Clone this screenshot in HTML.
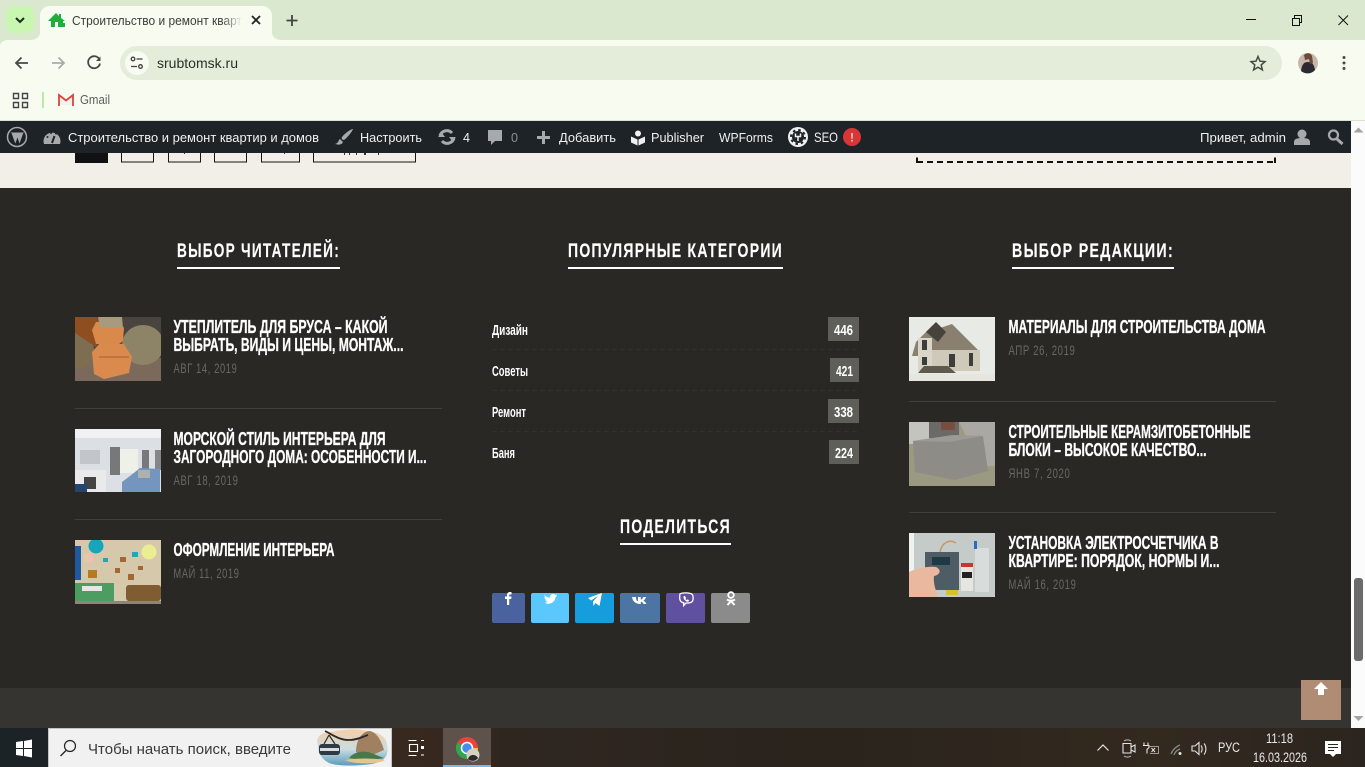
<!DOCTYPE html>
<html lang="ru"><head><meta charset="utf-8"><title>srubtomsk.ru</title>
<style>
html,body{margin:0;padding:0;width:1365px;height:767px;overflow:hidden;background:#2a2825}
svg{display:block;position:absolute;left:0;top:0}
text{font-family:"Liberation Sans","DejaVu Sans",sans-serif}
.h{font-weight:700;font-size:19.500px;fill:#fff;letter-spacing:1.800px;stroke:#fff;stroke-width:.15px}
.t{font-weight:700;font-size:18px;fill:#fff;stroke:#fff;stroke-width:.3px}
.d{font-size:14px;fill:#6a6864;letter-spacing:1px}
.c{font-weight:700;font-size:14.500px;fill:#fff}
.b{font-weight:700;font-size:14.500px;fill:#fff}
.w{font-size:13px;fill:#f0f0f1}
</style></head><body>
<svg width="1365" height="767" viewBox="0 0 1365 767" xmlns="http://www.w3.org/2000/svg">
<defs>
<linearGradient id="fade" x1="0" x2="1"><stop offset="0" stop-color="#f7fbf0" stop-opacity="0"/><stop offset="1" stop-color="#f7fbf0"/></linearGradient>
<linearGradient id="tb" x1="0" x2="1"><stop offset="0" stop-color="#1b2327"/><stop offset=".035" stop-color="#1d2226"/><stop offset=".3" stop-color="#38291f"/><stop offset=".38" stop-color="#2f2620"/><stop offset=".6" stop-color="#2a241d"/><stop offset=".85" stop-color="#33291f"/><stop offset="1" stop-color="#2b251f"/></linearGradient>
<linearGradient id="sky" x1="0" x2="0" y2="1"><stop offset="0" stop-color="#f6cfa8"/><stop offset=".55" stop-color="#c9dde2"/><stop offset="1" stop-color="#5c9bbb"/></linearGradient>
<clipPath id="c1"><rect x="75" y="317" width="86" height="64"/></clipPath>
<clipPath id="c2"><rect x="75" y="429" width="86" height="63"/></clipPath>
<clipPath id="c3"><rect x="75" y="540" width="86" height="64"/></clipPath>
<clipPath id="c4"><rect x="909" y="317" width="86" height="64"/></clipPath>
<clipPath id="c5"><rect x="909" y="422" width="86" height="64"/></clipPath>
<clipPath id="c6"><rect x="909" y="533" width="86" height="64"/></clipPath>
</defs>

<!-- browser chrome -->
<rect width="1365" height="40" fill="#d9e8cf"/>
<rect y="40" width="1365" height="81" fill="#f7fbf0"/>
<path d="M0 40h8c-5 0-8 3-8 6z" fill="#d9e8cf"/>
<rect y="120" width="1365" height="1" fill="#dcdfd6"/>
<rect x="6" y="6" width="28" height="27" rx="8" fill="#c9f7b1"/>
<path d="M16 18l4 4 4-4" fill="none" stroke="#1f2a1c" stroke-width="2"/>
<path d="M30 40c6 0 10-3 10-8V16c0-6 4-10 10-10h212c6 0 10 4 10 10v16c0 5 4 8 10 8z" fill="#f7fbf0"/>
<path d="M48 21l8-8 3 3v-2h2v4l4 3h-2v6H51v-6z" fill="#1fae3c"/><rect x="55" y="22" width="3" height="5" fill="#f7fbf0"/><rect x="60" y="23" width="5" height="4" fill="#1fae3c"/>
<text x="72" y="25" font-size="13" fill="#3a3f38" textLength="170" lengthAdjust="spacingAndGlyphs">Строительство и ремонт кварт</text>
<rect x="222" y="10" width="20" height="22" fill="url(#fade)"/>
<path d="M252 16l8 8M260 16l-8 8" stroke="#222" stroke-width="1.800"/>
<path d="M292 15v11M286.500 20.500h11" stroke="#444" stroke-width="1.800"/>
<path d="M1246 19.500h10" stroke="#111" stroke-width="1"/>
<path d="M1292.500 18.500h7v7h-7zM1294.500 18v-2.500h7v7h-2" fill="none" stroke="#111" stroke-width="1"/>
<path d="M1338.500 15.500l9.500 9.500M1348 15.500l-9.500 9.500" stroke="#111" stroke-width="1"/>

<path d="M28 63H16M21.500 57.500L16 63l5.500 5.500" fill="none" stroke="#444c42" stroke-width="1.800"/>
<path d="M52 63h12M58.500 57.500L64 63l-5.500 5.500" fill="none" stroke="#a9aea5" stroke-width="1.800"/>
<path d="M99.500 59.500a6 6 0 1 0 .5 4" fill="none" stroke="#444c42" stroke-width="1.800"/><path d="M100.500 56.500v4.500H96z" fill="#444c42"/>
<rect x="120" y="46" width="1162" height="34" rx="17" fill="#e3edd9"/>
<circle cx="137" cy="63" r="12" fill="#f7fbf0"/>
<circle cx="133" cy="59" r="1.800" fill="none" stroke="#3d443b" stroke-width="1.300"/><path d="M136.500 59h6M131 66.500h6" stroke="#3d443b" stroke-width="1.300"/><circle cx="140.500" cy="66.500" r="1.800" fill="none" stroke="#3d443b" stroke-width="1.300"/>
<text x="157" y="68" font-size="14" fill="#2b3029" textLength="81" lengthAdjust="spacingAndGlyphs">srubtomsk.ru</text>
<path d="M1258 56.500l2 4.700 5 .4-3.800 3.300 1.200 5-4.400-2.700-4.400 2.700 1.200-5-3.800-3.300 5-.4z" fill="none" stroke="#444c42" stroke-width="1.500"/>
<circle cx="1308" cy="63" r="10" fill="#c9b6a8"/><path d="M1301 71c1-7 3-9 7-9s6 2 7 8a10 10 0 0 1-14 1z" fill="#2c2a30"/><path d="M1304 55c3-3 7-2 8 1l1 7-3 1-1-5-4 1z" fill="#6a4a38"/>
<circle cx="1344" cy="57.500" r="1.500" fill="#444c42"/><circle cx="1344" cy="63" r="1.500" fill="#444c42"/><circle cx="1344" cy="68.500" r="1.500" fill="#444c42"/>
<path d="M13.500 93.500h5v5h-5zM22.500 93.500h5v5h-5zM13.500 102.500h5v5h-5zM22.500 102.500h5v5h-5z" fill="none" stroke="#444" stroke-width="1.400"/>
<rect x="42" y="92" width="2" height="16" fill="#bde8a5"/>
<path d="M59 105V95l7 5.500 7-5.500v10" fill="#f1f1ee"/><path d="M59 106V95l7 5.500L73 95v11" fill="none" stroke="#d8463a" stroke-width="1.800"/>
<text x="80" y="104" font-size="13" fill="#5b5f58" textLength="30" lengthAdjust="spacingAndGlyphs">Gmail</text>

<!-- page -->
<rect y="153" width="1351" height="35" fill="#f2efe9"/>
<rect x="75" y="153" width="33" height="10" fill="#111"/>
<g fill="none" stroke="#151515" stroke-width="1"><rect x="121.500" y="150" width="32" height="12"/><rect x="168.500" y="150" width="32" height="12"/><rect x="214.500" y="150" width="32" height="12"/><rect x="261.500" y="150" width="38" height="12"/><rect x="313.500" y="150" width="102" height="12"/></g>
<g fill="#333"><rect x="344" y="153" width="1" height="2"/><rect x="349" y="153" width="1" height="2"/><rect x="356" y="153" width="1" height="2"/><rect x="364" y="153" width="2" height="2"/><rect x="378" y="153" width="1" height="2"/><rect x="184" y="153" width="1" height="1"/><rect x="284" y="153" width="1" height="1"/></g>
<path d="M917 162h358" fill="none" stroke="#111" stroke-width="2" stroke-dasharray="6 4"/>
<path d="M1275 163v-5.500M917 163v-5.500" fill="none" stroke="#111" stroke-width="2"/>
<rect y="188" width="1351" height="500" fill="#2a2825"/>
<rect y="688" width="1351" height="40" fill="#353430"/>

<!-- headings -->
<text class="h" x="177" y="257" textLength="163" lengthAdjust="spacingAndGlyphs">ВЫБОР ЧИТАТЕЛЕЙ:</text>
<rect x="177" y="267" width="163" height="2" fill="#fff"/>
<text class="h" x="568" y="257" textLength="215" lengthAdjust="spacingAndGlyphs">ПОПУЛЯРНЫЕ КАТЕГОРИИ</text>
<rect x="568" y="267" width="215" height="2" fill="#fff"/>
<text class="h" x="1012" y="257" textLength="162" lengthAdjust="spacingAndGlyphs">ВЫБОР РЕДАКЦИИ:</text>
<rect x="1012" y="267" width="162" height="2" fill="#fff"/>
<text class="h" x="620" y="533" textLength="111" lengthAdjust="spacingAndGlyphs">ПОДЕЛИТЬСЯ</text>
<rect x="620" y="543" width="111" height="2" fill="#fff"/>

<!-- left column -->
<g clip-path="url(#c1)"><rect x="75" y="317" width="86" height="64" fill="#4a4440"/><rect x="75" y="358" width="86" height="23" fill="#7b6a5c"/><ellipse cx="143" cy="345" rx="21" ry="20" fill="#8d8467"/><ellipse cx="80" cy="350" rx="14" ry="18" fill="#7d6e52"/><path d="M75 317h22l6 12-7 18-21-14z" fill="#8f4e20"/><path d="M92 330l4-8h24l4 6-1 13-4 3H96z" fill="#d9894a"/><path d="M98 317h24l1 11H100z" fill="#a89a7c"/><path d="M92 352l8-9 24 1 8 13-3 16-25 6-10-5z" fill="#d98a4c"/><path d="M99 357l30 0" stroke="#a8622a" stroke-width="1" fill="none"/></g>
<g clip-path="url(#c2)"><rect x="75" y="429" width="86" height="63" fill="#dcdfe3"/><rect x="75" y="429" width="86" height="9" fill="#eff1f3"/><rect x="120" y="449" width="18" height="24" fill="#eef1e8"/><rect x="110" y="447" width="10" height="28" fill="#77787a"/><rect x="142" y="450" width="7" height="24" fill="#77787a"/><rect x="155" y="450" width="6" height="20" fill="#85868a"/><rect x="80" y="450" width="20" height="14" fill="#c2c6ca"/><rect x="75" y="470" width="31" height="22" fill="#eaeaea"/><rect x="84" y="477" width="12" height="12" fill="#444"/><rect x="75" y="484" width="12" height="8" fill="#23456f"/><path d="M122 482l8-6 10-8 20 1v23h-38z" fill="#7495bd"/><rect x="138" y="470" width="12" height="8" fill="#aeb1ae"/></g>
<g clip-path="url(#c3)"><rect x="75" y="540" width="86" height="64" fill="#d6c9ab"/><rect x="75" y="546" width="6" height="34" fill="#1e5aa0"/><circle cx="96" cy="546" r="7.500" fill="#17a4bd"/><circle cx="149" cy="552" r="7.500" fill="#ecec93"/><circle cx="89" cy="558" r="5" fill="#eec2b0"/><g fill="#a5672f"><rect x="120" y="557" width="6" height="5"/><rect x="138" y="566" width="5" height="4"/><rect x="115" y="568" width="5" height="5"/><rect x="128" y="574" width="6" height="6"/></g><rect x="103" y="558" width="5" height="4" fill="#2aa2b8"/><rect x="132" y="552" width="6" height="5" fill="#2aa2b8"/><rect x="88" y="570" width="9" height="8" fill="#b87a20"/><rect x="75" y="583" width="39" height="18" fill="#4d9d63"/><rect x="82" y="586" width="20" height="5" fill="#e6e6e6"/><rect x="126" y="585" width="35" height="16" rx="3" fill="#805c33"/><rect x="75" y="601" width="86" height="3" fill="#8c8578"/></g>
<text class="t" x="173.500" y="333" textLength="214" lengthAdjust="spacingAndGlyphs">УТЕПЛИТЕЛЬ ДЛЯ БРУСА – КАКОЙ</text>
<text class="t" x="173.500" y="351" textLength="230" lengthAdjust="spacingAndGlyphs">ВЫБРАТЬ, ВИДЫ И ЦЕНЫ, МОНТАЖ...</text>
<text class="d" x="173.500" y="373" textLength="64" lengthAdjust="spacingAndGlyphs">АВГ 14, 2019</text>
<rect x="75" y="408" width="367" height="1" fill="#41403c"/>
<text class="t" x="173.500" y="445" textLength="212" lengthAdjust="spacingAndGlyphs">МОРСКОЙ СТИЛЬ ИНТЕРЬЕРА ДЛЯ</text>
<text class="t" x="173.500" y="463" textLength="253" lengthAdjust="spacingAndGlyphs">ЗАГОРОДНОГО ДОМА: ОСОБЕННОСТИ И...</text>
<text class="d" x="173.500" y="485" textLength="65" lengthAdjust="spacingAndGlyphs">АВГ 18, 2019</text>
<rect x="75" y="519" width="367" height="1" fill="#41403c"/>
<text class="t" x="173.500" y="556" textLength="161" lengthAdjust="spacingAndGlyphs">ОФОРМЛЕНИЕ ИНТЕРЬЕРА</text>
<text class="d" x="173.500" y="578" textLength="66" lengthAdjust="spacingAndGlyphs">МАЙ 11, 2019</text>

<!-- categories -->
<text class="c" x="492" y="335" textLength="36" lengthAdjust="spacingAndGlyphs">Дизайн</text>
<text class="c" x="492" y="376" textLength="36" lengthAdjust="spacingAndGlyphs">Советы</text>
<text class="c" x="492" y="417" textLength="34" lengthAdjust="spacingAndGlyphs">Ремонт</text>
<text class="c" x="492" y="458" textLength="23" lengthAdjust="spacingAndGlyphs">Баня</text>
<path d="M492 349.500h367M492 390.500h367M492 431.500h367" stroke="#33312d" stroke-width="1" stroke-dasharray="5 3"/>
<rect x="828" y="317" width="31" height="24" fill="#5f5f59"/><text class="b" x="834" y="335" textLength="19" lengthAdjust="spacingAndGlyphs">446</text>
<rect x="830" y="358" width="29" height="24" fill="#5f5f59"/><text class="b" x="836" y="376" textLength="17" lengthAdjust="spacingAndGlyphs">421</text>
<rect x="828" y="399" width="31" height="24" fill="#5f5f59"/><text class="b" x="834" y="417" textLength="19" lengthAdjust="spacingAndGlyphs">338</text>
<rect x="829" y="440" width="30" height="24" fill="#5f5f59"/><text class="b" x="835" y="458" textLength="18" lengthAdjust="spacingAndGlyphs">224</text>

<!-- social -->
<rect x="492" y="593" width="33" height="30" rx="2" fill="#4a639f"/>
<rect x="531" y="593" width="38" height="30" rx="2" fill="#5ac8fd"/>
<rect x="575" y="593" width="39" height="30" rx="2" fill="#179cde"/>
<rect x="620" y="593" width="40" height="30" rx="2" fill="#4c75a3"/>
<rect x="666" y="593" width="39" height="30" rx="2" fill="#5f519f"/>
<rect x="711" y="593" width="39" height="30" rx="2" fill="#8b8b8b"/>
<path d="M507 605v-6h-2v-2.500h2v-1.500c0-2 1-3 3-3h1.500v2.500H510c-.6 0-.8.3-.8 1v1h2.300l-.3 2.500h-2v6z" fill="#fff"/>
<path d="M544 595c2 1.500 4 2.500 6 2.500 0-2.500 1.500-3.500 3-3.500 1 0 2 .5 2.500 1l1.500-.500-.8 1.500.8-.2c-.4.7-1 1.200-1.500 1.500-.2 3.500-3.500 6.500-7 6.500-1.500 0-2.800-.3-3.800-1 1.300 0 2.300-.4 3-1-1.300-.3-2-1-2.300-2h1c-1.300-.5-2-1.500-2-2.800l1 .3c-1-.8-1.400-2-.4-2.800z" fill="#fff"/>
<path d="M588 598l14-5-2.500 13-4-3-2 3-.5-4.500 5-5.500-7 4.500z" fill="#fff"/>
<path d="M633 597h3c0 3 1 4 2 4.300V597h2.800v2.700c1-.2 2-1.300 2.500-2.700h2.700c-.4 1.800-1.500 3-2.700 3.800 1.300.6 2.500 1.700 3.200 3.200h-3c-.6-1.300-1.500-2.200-2.700-2.400v2.400h-.8c-4.500 0-7.500-3-7.900-7z" fill="#fff"/>
<path d="M680 593.800c2.500-1.300 9.500-1.300 12 .4 1.500 1.500 1.500 6 0 7.500-1.300 1.100-3.500 1.400-6 1.300l-2.300 2.500v-2.700c-3-.5-4-2.200-4-4.800 0-2 0-3.300.3-4.200z" fill="none" stroke="#fff" stroke-width="1.300"/><path d="M684 596c1-.5 1.500 1 2 1.800.4.700-1 .7-.3 1.600.6.700 1 .6 1.500.2.800-.3 2 .8 1.700 1.400-.8 1.300-2.500.8-4-.7-1.400-1.400-2-3.500-.9-4.300z" fill="#fff"/>
<circle cx="731" cy="595" r="2.800" fill="none" stroke="#fff" stroke-width="1.800"/><path d="M727 599.500c2 1.500 6 1.500 8 0M731 601l-3.500 4M731 601l3.500 4" stroke="#fff" stroke-width="2" fill="none"/>

<!-- right column -->
<g clip-path="url(#c4)"><rect x="909" y="317" width="86" height="64" fill="#e8eae6"/><path d="M916 342l16-16 8 2 12-4 28 28-6 4H912z" fill="#8a8070"/><path d="M926 332l10-10 10 10-8 10z" fill="#47423b"/><rect x="918" y="338" width="14" height="33" fill="#d9d5c9"/><rect x="932" y="350" width="48" height="21" fill="#cfc9b9"/><rect x="922" y="340" width="5" height="10" fill="#3d3d3a"/><rect x="922" y="357" width="5" height="8" fill="#3d3d3a"/><rect x="949" y="354" width="6" height="13" fill="#3d3d3a"/><rect x="969" y="353" width="4" height="13" fill="#3d3d3a"/><path d="M918 373h38l-8-7h-24z" fill="#5f5a50"/><rect x="909" y="374" width="86" height="7" fill="#e6e6e0"/></g>
<g clip-path="url(#c5)"><rect x="909" y="422" width="86" height="64" fill="#9a9a82"/><rect x="909" y="422" width="20" height="22" fill="#c4c4be"/><rect x="929" y="422" width="30" height="16" fill="#6c6a66"/><path d="M959 422h36v44h-14z" fill="#aaa8a2"/><rect x="941" y="422" width="14" height="8" fill="#7a4e3e"/><path d="M913 441l40-6 30 1 5 35-33 9-40-8z" fill="#8e8c86"/><path d="M913 441l40-6 30 1-34 6z" fill="#9c9a94"/></g>
<g clip-path="url(#c6)"><rect x="909" y="533" width="86" height="64" fill="#c5cbc8"/><rect x="909" y="533" width="5" height="40" fill="#f0f2f0"/><rect x="925" y="552" width="34" height="38" fill="#4e5c66"/><rect x="932" y="557" width="18" height="8" fill="#1d3a45"/><rect x="961" y="567" width="12" height="24" fill="#e5e5e2"/><rect x="961" y="563" width="12" height="4" fill="#c33"/><rect x="962" y="572" width="10" height="6" fill="#222"/><path d="M909 572c8-4 20-6 27-5 6 3 4 8-2 9-1 8 2 14 4 21h-29z" fill="#eab89e"/><rect x="946" y="590" width="12" height="5" fill="#d8c22a"/><rect x="975" y="548" width="14" height="44" fill="#d8dcda"/><path d="M940 552c2-10 10-13 16-9" fill="none" stroke="#c39868" stroke-width="1.500"/><rect x="974" y="541" width="3" height="8" fill="#2a6dc0"/></g>
<text class="t" x="1008.500" y="333" textLength="257" lengthAdjust="spacingAndGlyphs">МАТЕРИАЛЫ ДЛЯ СТРОИТЕЛЬСТВА ДОМА</text>
<text class="d" x="1008.500" y="355" textLength="67" lengthAdjust="spacingAndGlyphs">АПР 26, 2019</text>
<rect x="909" y="401" width="367" height="1" fill="#41403c"/>
<text class="t" x="1008.500" y="438" textLength="242" lengthAdjust="spacingAndGlyphs">СТРОИТЕЛЬНЫЕ КЕРАМЗИТОБЕТОННЫЕ</text>
<text class="t" x="1008.500" y="456" textLength="198" lengthAdjust="spacingAndGlyphs">БЛОКИ – ВЫСОКОЕ КАЧЕСТВО...</text>
<text class="d" x="1008.500" y="478" textLength="62" lengthAdjust="spacingAndGlyphs">ЯНВ 7, 2020</text>
<rect x="909" y="512" width="367" height="1" fill="#41403c"/>
<text class="t" x="1008.500" y="549" textLength="210" lengthAdjust="spacingAndGlyphs">УСТАНОВКА ЭЛЕКТРОСЧЕТЧИКА В</text>
<text class="t" x="1008.500" y="567" textLength="211" lengthAdjust="spacingAndGlyphs">КВАРТИРЕ: ПОРЯДОК, НОРМЫ И...</text>
<text class="d" x="1008.500" y="589" textLength="68" lengthAdjust="spacingAndGlyphs">МАЙ 16, 2019</text>

<!-- to top -->
<rect x="1301" y="680" width="40" height="40" fill="#b08c75"/>
<path d="M1321 682l7 7h-4v6h-6v-6h-4z" fill="#fff"/>

<!-- scrollbar -->
<rect x="1351" y="121" width="14" height="607" fill="#fbfbfb"/>
<path d="M1358.500 127.500l5 5h-10z" fill="#a3a3a3"/>
<path d="M1353.500 716h10l-5 5z" fill="#a3a3a3"/>
<rect x="1354" y="578" width="9" height="83" rx="3" fill="#6b6b6b"/>

<!-- wp bar -->
<rect y="121" width="1351" height="32" fill="#1d2327"/>
<circle cx="17" cy="137" r="9.500" fill="none" stroke="#a7aaad" stroke-width="1.500"/>
<path d="M10 132.500h14l-.8.8-3.700 10.200-2-6-2.200 6-3.800-10.500z" fill="#a7aaad"/>
<path d="M44 144a8.500 8.500 0 1 1 16 0z" fill="#a7aaad"/><path d="M52 143l2.500-7" stroke="#1d2327" stroke-width="2"/><circle cx="47.500" cy="137" r="1" fill="#1d2327"/><circle cx="51" cy="133" r="1" fill="#1d2327"/><circle cx="56" cy="133.500" r="1" fill="#1d2327"/>
<text class="w" x="68" y="142" textLength="251" lengthAdjust="spacingAndGlyphs">Строительство и ремонт квартир и домов</text>
<path d="M353 129c-2 0-8 4-11 8-1 1 0 3 2 3 3-2 8-8 9-11zM340 139c-2 1-1 4-5 5 3 1 7 1 8-2z" fill="#a7aaad"/>
<text class="w" x="360" y="142" textLength="62" lengthAdjust="spacingAndGlyphs">Настроить</text>
<path d="M440 136a7 7 0 0 1 12-3M454 138a7 7 0 0 1-12 3" fill="none" stroke="#a7aaad" stroke-width="3"/><path d="M438 137l7 0-3-4zM456 137h-7l3 4z" fill="#a7aaad"/>
<text class="w" x="463" y="142" textLength="7" lengthAdjust="spacingAndGlyphs">4</text>
<path d="M488 130h14v11h-7l-4 4v-4h-3z" fill="#a7aaad"/>
<text class="w" x="511" y="142" textLength="7" lengthAdjust="spacingAndGlyphs" style="fill:#8c8f94">0</text>
<path d="M537 136h5v-5h3v5h5v3h-5v5h-3v-5h-5z" fill="#a7aaad"/>
<text class="w" x="559" y="142" textLength="57" lengthAdjust="spacingAndGlyphs">Добавить</text>
<circle cx="638" cy="133.500" r="3" fill="#f0f0f1"/><path d="M631 136.500l6.500 3v6l-6.500-3zM645 136.500l-6.500 3v6l6.500-3z" fill="#f0f0f1"/>
<text class="w" x="651" y="142" textLength="53" lengthAdjust="spacingAndGlyphs">Publisher</text>
<text class="w" x="719" y="142" textLength="54" lengthAdjust="spacingAndGlyphs">WPForms</text>
<circle cx="798" cy="137" r="10" fill="#f0f0f1"/><circle cx="798" cy="137" r="6" fill="#1d2327"/><circle cx="798" cy="137" r="7" fill="none" stroke="#1d2327" stroke-width="2" stroke-dasharray="2.500 3"/><path d="M795.500 133.500v3h5v-3M798 136v5" fill="none" stroke="#f0f0f1" stroke-width="1.500"/>
<text x="814" y="142" font-size="14" fill="#f0f0f1" textLength="24" lengthAdjust="spacingAndGlyphs">SEO</text>
<circle cx="852" cy="137" r="9" fill="#d63638"/>
<text x="852" y="141.500" font-size="12" font-weight="700" fill="#f3c9a5" text-anchor="middle">!</text>
<text class="w" x="1200" y="142" textLength="86" lengthAdjust="spacingAndGlyphs">Привет, admin</text>
<circle cx="1302" cy="134" r="4.500" fill="#a7aaad"/><path d="M1294 145v-3c0-3 3-4 8-4s8 1 8 4v3z" fill="#a7aaad"/>
<circle cx="1333.500" cy="135" r="4.500" fill="none" stroke="#a7aaad" stroke-width="2.200"/><path d="M1337 139l5.500 5" stroke="#a7aaad" stroke-width="3"/>

<!-- taskbar -->
<rect y="728" width="1365" height="39" fill="url(#tb)"/>
<path d="M16 742l7-1v7h-7zM24 741l8-1.500V748h-8zM16 749h7v7l-7-1zM24 749h8v8.500l-8-1.500z" fill="#fff"/>
<rect x="48" y="728" width="344" height="39" fill="#f1f1f1"/>
<path d="M48.500 767v-38.500h343V767" fill="none" stroke="#c4c4c4"/>
<circle cx="70" cy="746" r="5.500" fill="none" stroke="#222" stroke-width="1.200"/><path d="M66 750.500l-5.500 5.500" stroke="#222" stroke-width="1.300"/>
<text x="88" y="754" font-size="14.500" fill="#3a3a3a" textLength="203" lengthAdjust="spacingAndGlyphs">Чтобы начать поиск, введите</text>
<path d="M318 745c-3-6 2-13 12-13 10-2 25-4 38-1 10 1 19 6 19 14 2 8-1 14-8 17-10 4-40 5-50 1-6-3-12-10-11-18z" fill="url(#sky)"/>
<path d="M356 752c0-12 6-21 14-21 7 2 11 9 14 19l-14 6z" fill="#a0805f"/>
<path d="M349 758c5-6 14-8 22-5l13 5-18 3z" fill="#47774a"/>
<path d="M345 760c12-2 28-2 40 0-6 4-30 5-40 0z" fill="#e2c68b"/>
<path d="M325 731c8 4 14 9 24 9 8 0 13-3 19-5" fill="none" stroke="#2a2a2a" stroke-width="1.800"/>
<path d="M329 735l-5 9M329 735l6 9" stroke="#2a2a2a" stroke-width="1.200"/>
<rect x="319" y="744" width="21" height="11" rx="3" fill="#2d3b45"/><rect x="320" y="748" width="19" height="3" fill="#d9dfe0"/>
<path d="M408.500 740.500h8M408.500 755.500h8M409.500 744.500h8v7h-8zM421 740.500h3M421 755h3" fill="none" stroke="#fff" stroke-width="1.100"/><rect x="421" y="746" width="3" height="3" fill="#fff"/>
<rect x="443" y="728" width="48" height="39" fill="#5d524c"/>
<rect x="443" y="765" width="48" height="2" fill="#76b9ed"/>
<circle cx="467" cy="748" r="11" fill="#e9443a"/>
<path d="M467 748l-9.500-5.500A11 11 0 0 0 467 759z" fill="#2da84f"/>
<path d="M467 748h11a11 11 0 0 1-11 11z" fill="#f6c52c"/>
<circle cx="467" cy="748" r="5.500" fill="#4a8bf0" stroke="#fff" stroke-width="1.500"/>
<circle cx="473" cy="755" r="6.500" fill="#d6cfc6"/><path d="M468 759c1-3 3-4 5-4s4 1 5 3a6.500 6.500 0 0 1-10 1z" fill="#2a2a2e"/>

<path d="M1097.500 750.500l5.500-5.500 5.500 5.500" fill="none" stroke="#e4e4e4" stroke-width="1.200"/>
<path d="M1123 743.500h8v9.500h-8zM1131 747l4-2v7l-4-2z" fill="none" stroke="#e4e4e4" stroke-width="1.100"/><path d="M1124 741c2-1.500 5-1.500 7 0M1124 756c2 1.500 5 1.500 7 0" fill="none" stroke="#bbb" stroke-width="1"/>
<path d="M1144 742.500v3M1148 742.500v3M1143 745.500h6v2l-2 2v4" fill="none" stroke="#e4e4e4" stroke-width="1.100"/><path d="M1150 746.500h8.500v7H1150" fill="none" stroke="#999" stroke-width="1"/><path d="M1151.500 748l3.500 4M1155 748l-3.500 4" stroke="#e4e4e4" stroke-width="1"/>
<path d="M1171 754c2-5 6-8 9-9M1174 755c1-3 3-5 6-6" fill="none" stroke="#8a8a8a" stroke-width="1.200"/><circle cx="1180" cy="753.500" r="1.500" fill="#e4e4e4"/>
<path d="M1192 746h3l4-3.500v12l-4-3.500h-3z" fill="none" stroke="#e4e4e4" stroke-width="1.100"/><path d="M1201 745.500c1.500 2 1.500 5 0 7M1204 743.500c2.500 3 2.500 8 0 11" fill="none" stroke="#e4e4e4" stroke-width="1.100"/>
<text x="1218" y="752" font-size="13.500" fill="#e8e8e8" textLength="22" lengthAdjust="spacingAndGlyphs">РУС</text>
<text x="1266" y="743" font-size="13.500" fill="#e8e8e8" textLength="27" lengthAdjust="spacingAndGlyphs">11:18</text>
<text x="1253" y="762" font-size="13.500" fill="#e8e8e8" textLength="54" lengthAdjust="spacingAndGlyphs">16.03.2026</text>
<path d="M1325 741h16v13h-5l-3 3-3-3h-5z" fill="#fff"/><path d="M1328 744.500h10M1328 747.500h10M1328 750.500h6" stroke="#2b251f" stroke-width="1"/>
</svg>
</body></html>
